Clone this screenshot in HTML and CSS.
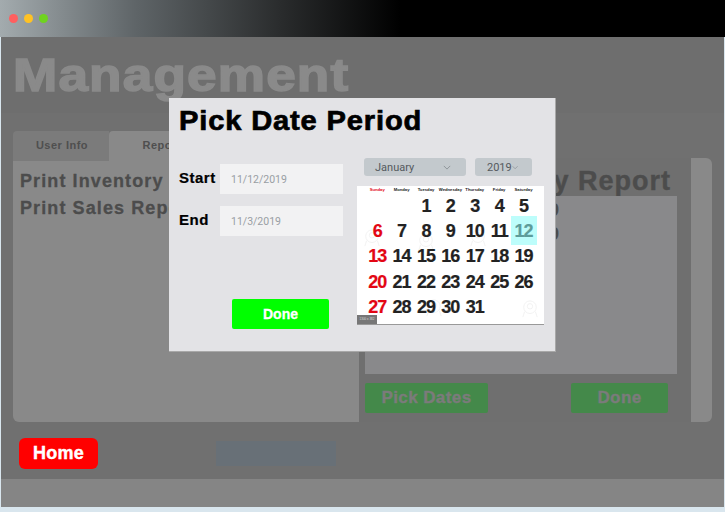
FILE: index.html
```html
<!DOCTYPE html>
<html lang="en">
<head>
    <meta charset="UTF-8">
    <meta name="viewport" content="width=device-width, initial-scale=1.0">
    <title>Management</title>
    <link rel="stylesheet" href="styles.css">
</head>
<body>
    <div class="window">
        <div class="titlebar">
            <span class="dot dot-red"></span>
            <span class="dot dot-yellow"></span>
            <span class="dot dot-green"></span>
        </div>

        <div class="header">
            <h1>Management</h1>
        </div>

        <div class="main">
            <div class="tabs">
                <div class="tab">User Info</div>
                <div class="tab tab-active">Reports</div>
            </div>

            <div class="panel">
                <div class="panel-left">
                    <p>Print Inventory Report</p>
                    <p>Print Sales Report</p>
                </div>
                <div class="panel-right">
                    <h2>Inventory Report</h2>
                    <div class="report-list">
                        <p>11/12/2019</p>
                        <p>11/3/2019</p>
                    </div>
                    <div class="report-actions">
                        <button class="green-btn pick-btn">Pick Dates</button>
                        <button class="green-btn done-btn">Done</button>
                    </div>
                </div>
                <div class="panel-strip"></div>
            </div>

            <div class="footer-row">
                <button class="home-btn">Home</button>
                <div class="blank-btn"></div>
            </div>
        </div>

        <div class="bottom-band"></div>
    </div>

    <div class="modal">
        <h2>Pick Date Period</h2>
        <div class="modal-body">
            <div class="modal-form">
                <div class="field">
                    <label>Start</label>
                    <input class="date-input" type="text" value="11/12/2019">
                </div>
                <div class="field">
                    <label>End</label>
                    <input class="date-input" type="text" value="11/3/2019">
                </div>
                <button class="modal-done">Done</button>
            </div>

            <div class="modal-picker">
                <div class="selects">
                    <div class="select select-month">January
                        <svg class="chev" viewBox="0 0 10 6"><path d="M1 1l4 4 4-4"/></svg>
                    </div>
                    <div class="select select-year">2019
                        <svg class="chev" viewBox="0 0 10 6"><path d="M1 1l4 4 4-4"/></svg>
                    </div>
                </div>

                <div class="calendar">
                    <svg class="mark mark-a" viewBox="0 0 20 22"><circle cx="10" cy="9" r="7"/><circle cx="10" cy="8" r="3"/><path d="M4 14l-2 6M16 14l2 6"/></svg>
                    <svg class="mark mark-b" viewBox="0 0 20 22"><circle cx="10" cy="9" r="7"/><circle cx="10" cy="8" r="3"/><path d="M4 14l-2 6M16 14l2 6"/></svg>
                    <svg class="mark mark-c" viewBox="0 0 20 22"><circle cx="10" cy="9" r="7"/><circle cx="10" cy="8" r="3"/><path d="M4 14l-2 6M16 14l2 6"/></svg>
                    <svg class="mark mark-d" viewBox="0 0 20 22"><circle cx="10" cy="9" r="7"/><circle cx="10" cy="8" r="3"/><path d="M4 14l-2 6M16 14l2 6"/></svg>
                    <svg class="mark mark-e" viewBox="0 0 20 22"><circle cx="10" cy="9" r="7"/><circle cx="10" cy="8" r="3"/><path d="M4 14l-2 6M16 14l2 6"/></svg>
                    <div class="day-names">
                        <span class="red">Sunday</span><span>Monday</span><span>Tuesday</span><span>Wednesday</span><span>Thursday</span><span>Friday</span><span>Saturday</span>
                    </div>
                    <div class="days">
                        <span></span><span></span><span>1</span><span>2</span><span>3</span><span>4</span><span>5</span>
                        <span class="red">6</span><span>7</span><span>8</span><span>9</span><span>10</span><span>11</span><span class="today">12</span>
                        <span class="red">13</span><span>14</span><span>15</span><span>16</span><span>17</span><span>18</span><span>19</span>
                        <span class="red">20</span><span>21</span><span>22</span><span>23</span><span>24</span><span>25</span><span>26</span>
                        <span class="red">27</span><span>28</span><span>29</span><span>30</span><span>31</span>
                    </div>
                    <div class="size-tag">1300 x 382</div>
                </div>
            </div>
        </div>
    </div>
</body>
</html>
```

FILE: styles.css
```css
* {
    box-sizing: border-box;
}

body {
    margin: 0;
    height: 512px;
    overflow: hidden;
    font-family: "Liberation Sans", Arial, sans-serif;
    background: #d9e6ee;
}

p, h1, h2 {
    margin: 0;
}

button {
    border: none;
    padding: 0;
    font-family: inherit;
    font-weight: bold;
}

.window {
    height: 507px;
    margin: 0 1px;
    display: flex;
    flex-direction: column;
    background: #707070;
}

/* title bar */
.titlebar {
    height: 37px;
    margin: 0 -1px;
    padding: 0 0 0 9px;
    display: flex;
    align-items: center;
    gap: 6px;
    background: linear-gradient(to right, #a3abae 0, #5f6568 135px, #2a2c2d 280px, #000 400px);
}

.dot {
    width: 9px;
    height: 9px;
    border-radius: 50%;
}

.dot-red { background: #ff5f5f; }
.dot-yellow { background: #ffc224; }
.dot-green { background: #6fd31f; }

.header {
    height: 76px;
    padding: 11px 0 0 12px;
    background: #6e6e6e;
}

.header h1 {
    display: inline-block;
    font-size: 46px;
    line-height: 54px;
    font-weight: bold;
    letter-spacing: 1px;
    color: #8a8a8a;
    -webkit-text-stroke: 1.5px #8a8a8a;
    transform: scaleX(1.155);
    transform-origin: left;
}

.main {
    flex: 1;
    padding: 18px 12px 0;
    display: flex;
    flex-direction: column;
}

.tabs {
    display: flex;
    height: 30px;
}

.tab {
    width: 96px;
    padding-left: 2px;
    line-height: 29px;
    text-align: center;
    font-size: 11px;
    font-weight: bold;
    letter-spacing: .5px;
    color: #4f4f4f;
    background: #7b7b7b;
    border-radius: 4px 0 0 0;
}

.tab-active {
    width: 110px;
    background: #898989;
    border-radius: 4px 4px 0 0;
}

.panel {
    height: 261px;
    width: 699px;
    display: flex;
}

.panel-left {
    width: 346px;
    padding: 9px 7px;
    background: #898989;
    border-radius: 0 0 0 6px;
    overflow: hidden;
}

.panel-left p {
    font-size: 18px;
    line-height: 22px;
    margin-bottom: 5px;
    font-weight: bold;
    letter-spacing: 1.1px;
    white-space: nowrap;
    color: #4c4c4c;
    -webkit-text-stroke: .3px #4c4c4c;
}

.panel-right {
    width: 332px;
    margin-top: -3px;
    padding: 9px 14px 0 6px;
    background: #6f6f6f;
    display: flex;
    flex-direction: column;
}

.panel-right h2 {
    font-size: 27px;
    line-height: 29px;
    letter-spacing: 1px;
    text-align: right;
    padding-right: 6px;
    color: #4c4c4c;
    -webkit-text-stroke: .4px #4c4c4c;
    white-space: nowrap;
}

.report-list {
    height: 178px;
    padding: 2px 118px 0 0;
    background: #89898b;
    text-align: right;
}

.report-list p {
    font-size: 18px;
    line-height: 24px;
    font-weight: bold;
    color: #4c4c4c;
}

.report-actions {
    margin-top: 9px;
    display: flex;
    justify-content: space-between;
    padding-right: 9px;
}

.green-btn {
    height: 30px;
    border-radius: 2px;
    background: #44894a;
    color: #7b7b7b;
    font-size: 17px;
    letter-spacing: .4px;
    -webkit-text-stroke: .4px #7b7b7b;
}

.pick-btn { width: 123px; }
.done-btn { width: 97px; }

.panel-strip {
    flex: 1;
    margin-top: -3px;
    background: #898989;
    border-radius: 0 6px 6px 0;
}

.footer-row {
    margin-top: 16px;
    padding-left: 6px;
    display: flex;
    align-items: center;
}

.home-btn {
    width: 79px;
    height: 31px;
    border-radius: 6px;
    background: #ff0000;
    color: #fff;
    font-size: 18px;
    letter-spacing: .3px;
    -webkit-text-stroke: .4px #fff;
}

.blank-btn {
    width: 120px;
    height: 25px;
    margin-left: 118px;
    background: #687077;
}

.bottom-band {
    height: 28px;
    background: #858585;
}

/* date dialog */
.modal {
    position: absolute;
    left: 169px;
    top: 98px;
    width: 387px;
    height: 254px;
    padding: 6px 10px 0;
    background: #e3e3e6;
    border-right: 1px solid #a8a8a8;
    border-bottom: 1px solid #a8a8a8;
}

.modal h2 {
    display: inline-block;
    font-size: 28px;
    line-height: 33px;
    letter-spacing: .8px;
    color: #000;
    -webkit-text-stroke: .7px #000;
    white-space: nowrap;
    transform: scaleX(1.04);
    transform-origin: left;
}

.modal-body {
    margin-top: 21px;
    display: flex;
}

.modal-form {
    width: 178px;
}

.field {
    width: 164px;
    height: 30px;
    margin-top: 6px;
    margin-bottom: 12px;
    display: flex;
    align-items: center;
    justify-content: space-between;
}

.field label {
    margin-bottom: 4px;
    font-size: 15px;
    font-weight: bold;
    letter-spacing: .5px;
    color: #000;
    -webkit-text-stroke: .2px #000;
}

.date-input {
    width: 123px;
    height: 30px;
    padding: 0 0 0 11px;
    border: none;
    background: #f2f2f3;
    font-family: Roboto, sans-serif;
    font-size: 10.5px;
    color: #999ea3;
}

.modal-done {
    display: block;
    width: 97px;
    height: 30px;
    margin: 63px 0 0 53px;
    border-radius: 2px;
    background: #00ff00;
    color: #fff;
    font-size: 14px;
    -webkit-text-stroke: .3px #fff;
}

.modal-picker {
    width: 187px;
}

.selects {
    display: flex;
    gap: 9px;
    margin-left: 7px;
}

.select {
    height: 18px;
    display: flex;
    align-items: center;
    justify-content: space-between;
    border-radius: 3px;
    background: #c3c9cd;
    font-family: Roboto, sans-serif;
    font-size: 11px;
    color: #555a5e;
}

.select-month {
    width: 102px;
    padding: 0 15px 0 11px;
}

.select-year {
    width: 57px;
    padding: 0 14px 0 12px;
}

.chev {
    width: 8px;
    height: 5px;
    fill: none;
    stroke: #8e9499;
    stroke-width: 1.2;
}

.calendar {
    position: relative;
    width: 187px;
    height: 139px;
    margin-top: 10px;
    background: #fff;
    border-bottom: 1px solid #999;
}

.day-names {
    position: relative;
    display: grid;
    grid-template-columns: repeat(7, 24.4px);
    padding-left: 8px;
    height: 8px;
    text-align: center;
    font-size: 4.2px;
    line-height: 8px;
    font-weight: bold;
    color: #222;
}

.day-names span {
    white-space: nowrap;
}

.days {
    position: relative;
    display: grid;
    grid-template-columns: repeat(7, 24.4px);
    grid-auto-rows: 25.2px;
    padding-left: 8px;
    text-align: center;
    font-size: 18px;
    line-height: 25px;
    font-weight: bold;
    letter-spacing: -1px;
    color: #222;
    -webkit-text-stroke: .2px currentColor;
}

.red {
    color: #e30613;
}

.days .today {
    margin: -3px -1px -1px 0;
    padding: 3px 1px 0 0;
    background: #bdfdfb;
    color: #5d9c9a;
}

.size-tag {
    position: absolute;
    left: 0;
    bottom: 0;
    width: 20px;
    height: 9px;
    background: #777;
    color: #ddd;
    font-size: 3px;
    line-height: 9px;
    text-align: center;
    white-space: nowrap;
}

/* stock photo watermarks */
.mark {
    position: absolute;
    width: 18px;
    height: 20px;
    fill: none;
    stroke: #f1f1f1;
    stroke-width: 1;
}

.mark-a { left: 6px; top: 42px; }
.mark-b { left: 60px; top: 46px; }
.mark-c { left: 112px; top: 42px; }
.mark-d { left: 68px; top: 112px; }
.mark-e { right: 5px; top: 113px; }
```
